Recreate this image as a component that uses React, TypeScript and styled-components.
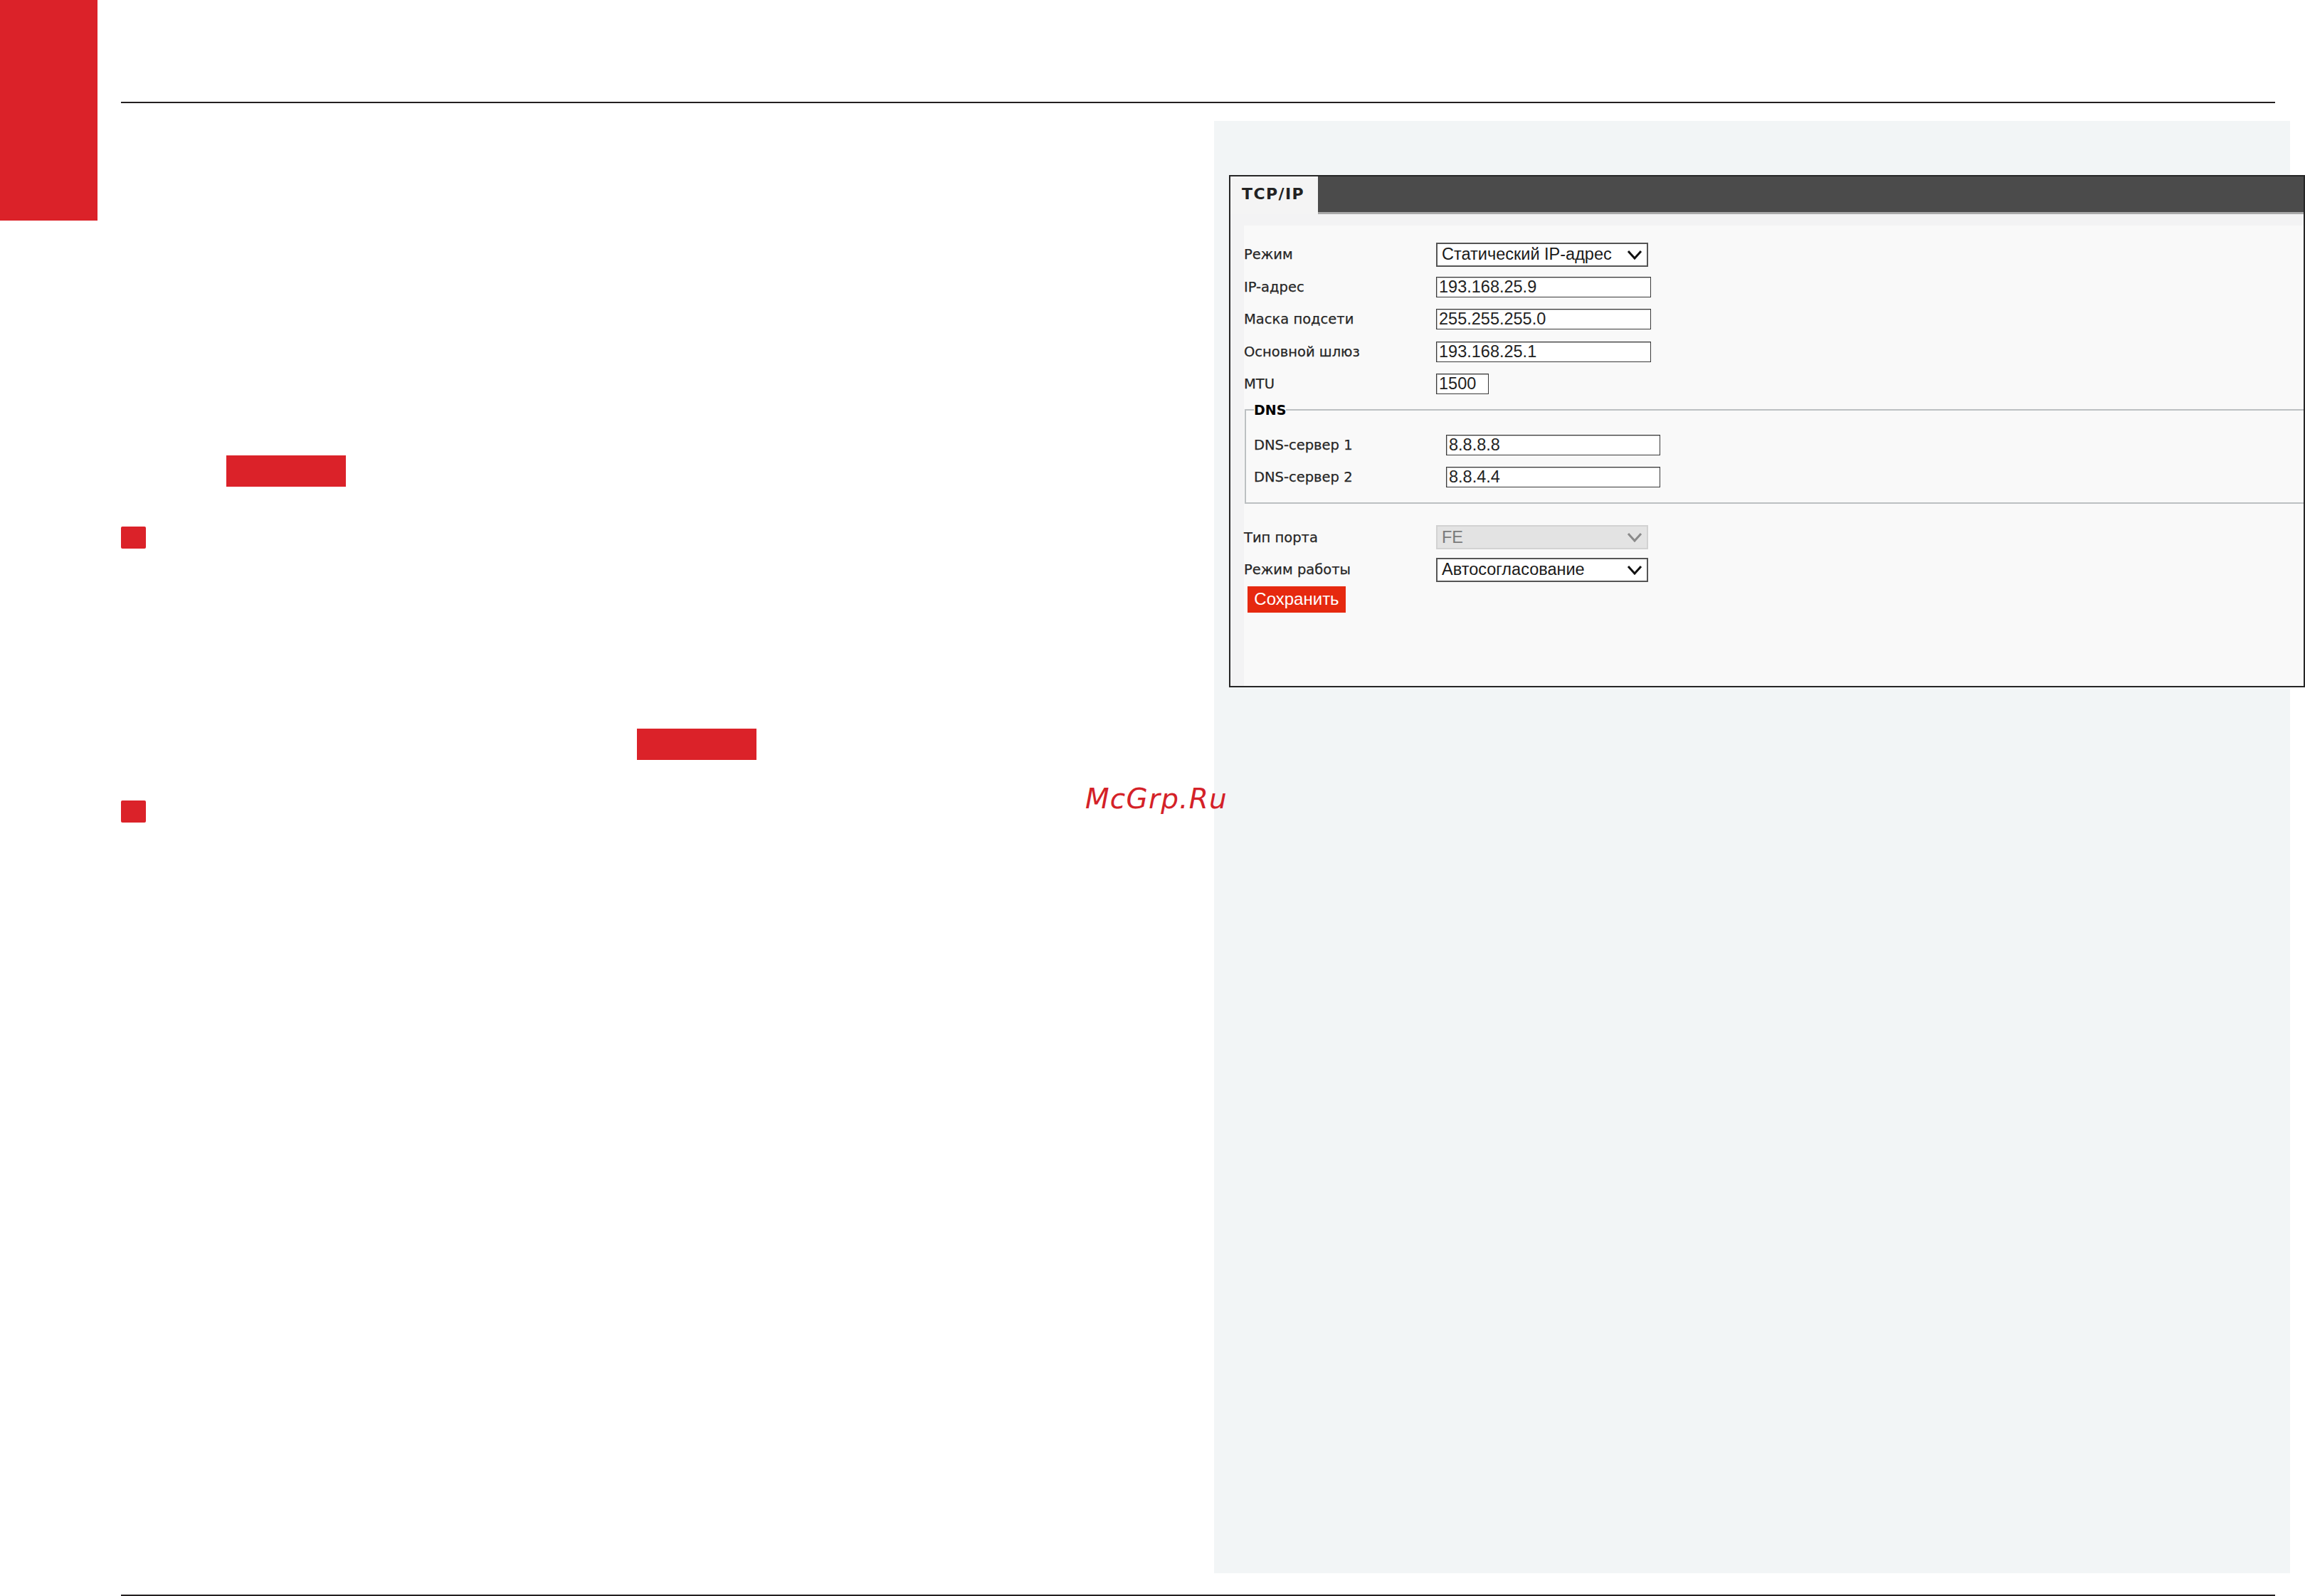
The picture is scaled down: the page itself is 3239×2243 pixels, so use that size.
import React from "react";
import styled, { createGlobalStyle } from "styled-components";

const GlobalStyle = createGlobalStyle`
  html, body {
    margin: 0;
    padding: 0;
    background: #ffffff;
  }
  body {
    font-family: "DejaVu Sans", "Liberation Sans", sans-serif;
  }
`;

// whole sheet
const Page = styled.div`
  position: relative;
  width: 3239px;
  height: 2243px;
  display: flex;
  overflow: hidden;
  background: #ffffff;
`;

const SideTab = styled.div`
  flex-shrink: 0;
  width: 137px;
  height: 310px;
  background: #db2229;
`;

const Main = styled.div`
  flex-shrink: 0;
  width: 3027px;
  margin-left: 33px;
  display: flex;
  flex-direction: column;
`;

const Header = styled.div`
  flex-shrink: 0;
  height: 143px;
`;

const Rule = styled.div`
  flex-shrink: 0;
  height: 2px;
  background: #231f20;
`;

const Body = styled.div`
  flex-shrink: 0;
  height: 2096px;
  display: flex;
`;

const TextColumn = styled.div`
  flex-shrink: 0;
  width: 1536px;
  display: flex;
  flex-direction: column;
  align-items: flex-start;
`;

const Highlight = styled.div<{ $top: number; $left: number }>`
  width: 168px;
  height: 44px;
  margin-top: ${(p) => p.$top}px;
  margin-left: ${(p) => p.$left}px;
  background: #db2229;
`;

const Marker = styled.div<{ $top: number }>`
  width: 35px;
  height: 31px;
  margin-top: ${(p) => p.$top}px;
  border-radius: 2px;
  background: #db2229;
`;

const Watermark = styled.div`
  position: absolute;
  left: 1525px;
  top: 1103px;
  font-family: "DejaVu Sans", sans-serif;
  font-style: italic;
  font-size: 39px;
  line-height: 40px;
  letter-spacing: 1.2px;
  color: #d42128;
`;

// screenshot side
const ShotPanel = styled.div`
  flex-shrink: 0;
  width: 1512px;
  height: 2041px;
  margin-top: 25px;
  background: #f2f5f6;
`;

const Window = styled.div`
  box-sizing: border-box;
  width: 1512px;
  height: 720px;
  margin: 76px 0 0 21px;
  border: 2px solid #262626;
  background: #f3f3f4;
  display: flex;
  flex-direction: column;
`;

const TabBar = styled.div`
  display: flex;
  height: 53px;
`;

const Tab = styled.div`
  width: 123px;
  padding-left: 16px;
  box-sizing: border-box;
  display: flex;
  align-items: center;
  padding-bottom: 4px;
  background: #f4f4f4;
  font-family: "DejaVu Sans", sans-serif;
  font-weight: bold;
  font-size: 22px;
  letter-spacing: 1.4px;
  color: #222;
`;

const TabRest = styled.div`
  flex: 1;
  background: #4b4b4b;
  border-bottom: 3px solid #a9a9a9;
`;

const Content = styled.div`
  flex: 1;
  margin: 16px 0 0 19px;
  padding-top: 18px;
  background: #f9f9f9;
`;

const Row = styled.div`
  display: flex;
  align-items: center;
  height: 45.5px;
`;

const Label = styled.div`
  width: 270px;
  flex-shrink: 0;
  font-family: "DejaVu Sans", sans-serif;
  font-size: 19.5px;
  color: #262626;
  -webkit-text-stroke: 0.25px #262626;
  white-space: nowrap;
`;

const Field = styled.div<{ $width: number }>`
  box-sizing: border-box;
  width: ${(p) => p.$width}px;
  height: 29px;
  padding-left: 3px;
  display: flex;
  align-items: center;
  border: 1px solid #3a3a3a;
  box-shadow: inset 1px 1px 0 #bdbdbd;
  background: #ffffff;
  font-family: "Liberation Sans", Arial, sans-serif;
  font-size: 23.5px;
  color: #222;
`;

const SelectBox = styled.div<{ $disabled?: boolean }>`
  box-sizing: border-box;
  width: 298px;
  height: 34px;
  padding: 0 6px 0 6px;
  display: flex;
  align-items: center;
  justify-content: space-between;
  border: ${(p) => (p.$disabled ? "2px solid #d2d2d2" : "2px solid #555")};
  background: ${(p) => (p.$disabled ? "#e3e3e3" : "#ffffff")};
  font-family: "Liberation Sans", Arial, sans-serif;
  font-size: 23.5px;
  color: ${(p) => (p.$disabled ? "#7a7a7a" : "#1a1a1a")};
`;

const DnsSet = styled.fieldset`
  margin: 2px 0 0 1px;
  padding: 16px 0 12px 11px;
  border: 2px solid #bcc0c2;
  border-right: none;
`;

const Legend = styled.legend`
  padding: 0;
  font-family: "DejaVu Sans", sans-serif;
  font-weight: bold;
  font-size: 19px;
  line-height: 22px;
  color: #000;
`;

const LowerRows = styled.div`
  margin-top: 25px;
`;

const SaveButton = styled.button`
  width: 138px;
  height: 37px;
  margin-left: 5px;
  padding: 0;
  border: none;
  background: #e6290f;
  color: #ffffff;
  font-family: "Liberation Sans", Arial, sans-serif;
  font-size: 24px;
  cursor: pointer;
`;

const Chevron = ({ color }: { color: string }) => (
  <svg width="22" height="14" viewBox="0 0 22 14">
    <path d="M2 2 L11 12 L20 2" fill="none" stroke={color} strokeWidth="3" />
  </svg>
);

const App = () => {
  return (
    <>
      <GlobalStyle />
      <Page>
        <SideTab />
        <Main>
          <Header />
          <Rule />
          <Body>
            <TextColumn>
              <Highlight $top={495} $left={148} />
              <Marker $top={56} />
              <Highlight $top={253} $left={725} />
              <Marker $top={57} />
            </TextColumn>
            <ShotPanel>
              <Window>
                <TabBar>
                  <Tab>TCP/IP</Tab>
                  <TabRest />
                </TabBar>
                <Content>
                  <Row>
                    <Label>Режим</Label>
                    <SelectBox>
                      Статический IP-адрес
                      <Chevron color="#111" />
                    </SelectBox>
                  </Row>
                  <Row>
                    <Label>IP-адрес</Label>
                    <Field $width={302}>193.168.25.9</Field>
                  </Row>
                  <Row>
                    <Label>Маска подсети</Label>
                    <Field $width={302}>255.255.255.0</Field>
                  </Row>
                  <Row>
                    <Label>Основной шлюз</Label>
                    <Field $width={302}>193.168.25.1</Field>
                  </Row>
                  <Row>
                    <Label>MTU</Label>
                    <Field $width={74}>1500</Field>
                  </Row>

                  <DnsSet>
                    <Legend>DNS</Legend>
                    <Row>
                      <Label>DNS-сервер 1</Label>
                      <Field $width={301}>8.8.8.8</Field>
                    </Row>
                    <Row>
                      <Label>DNS-сервер 2</Label>
                      <Field $width={301}>8.8.4.4</Field>
                    </Row>
                  </DnsSet>

                  <LowerRows>
                    <Row>
                      <Label>Тип порта</Label>
                      <SelectBox $disabled>
                        FE
                        <Chevron color="#8a8a8a" />
                      </SelectBox>
                    </Row>
                    <Row>
                      <Label>Режим работы</Label>
                      <SelectBox>
                        Автосогласование
                        <Chevron color="#111" />
                      </SelectBox>
                    </Row>
                  </LowerRows>
                  <SaveButton>Сохранить</SaveButton>
                </Content>
              </Window>
            </ShotPanel>
          </Body>
          <Rule />
        </Main>
        <Watermark>McGrp.Ru</Watermark>
      </Page>
    </>
  );
};

export default App;
